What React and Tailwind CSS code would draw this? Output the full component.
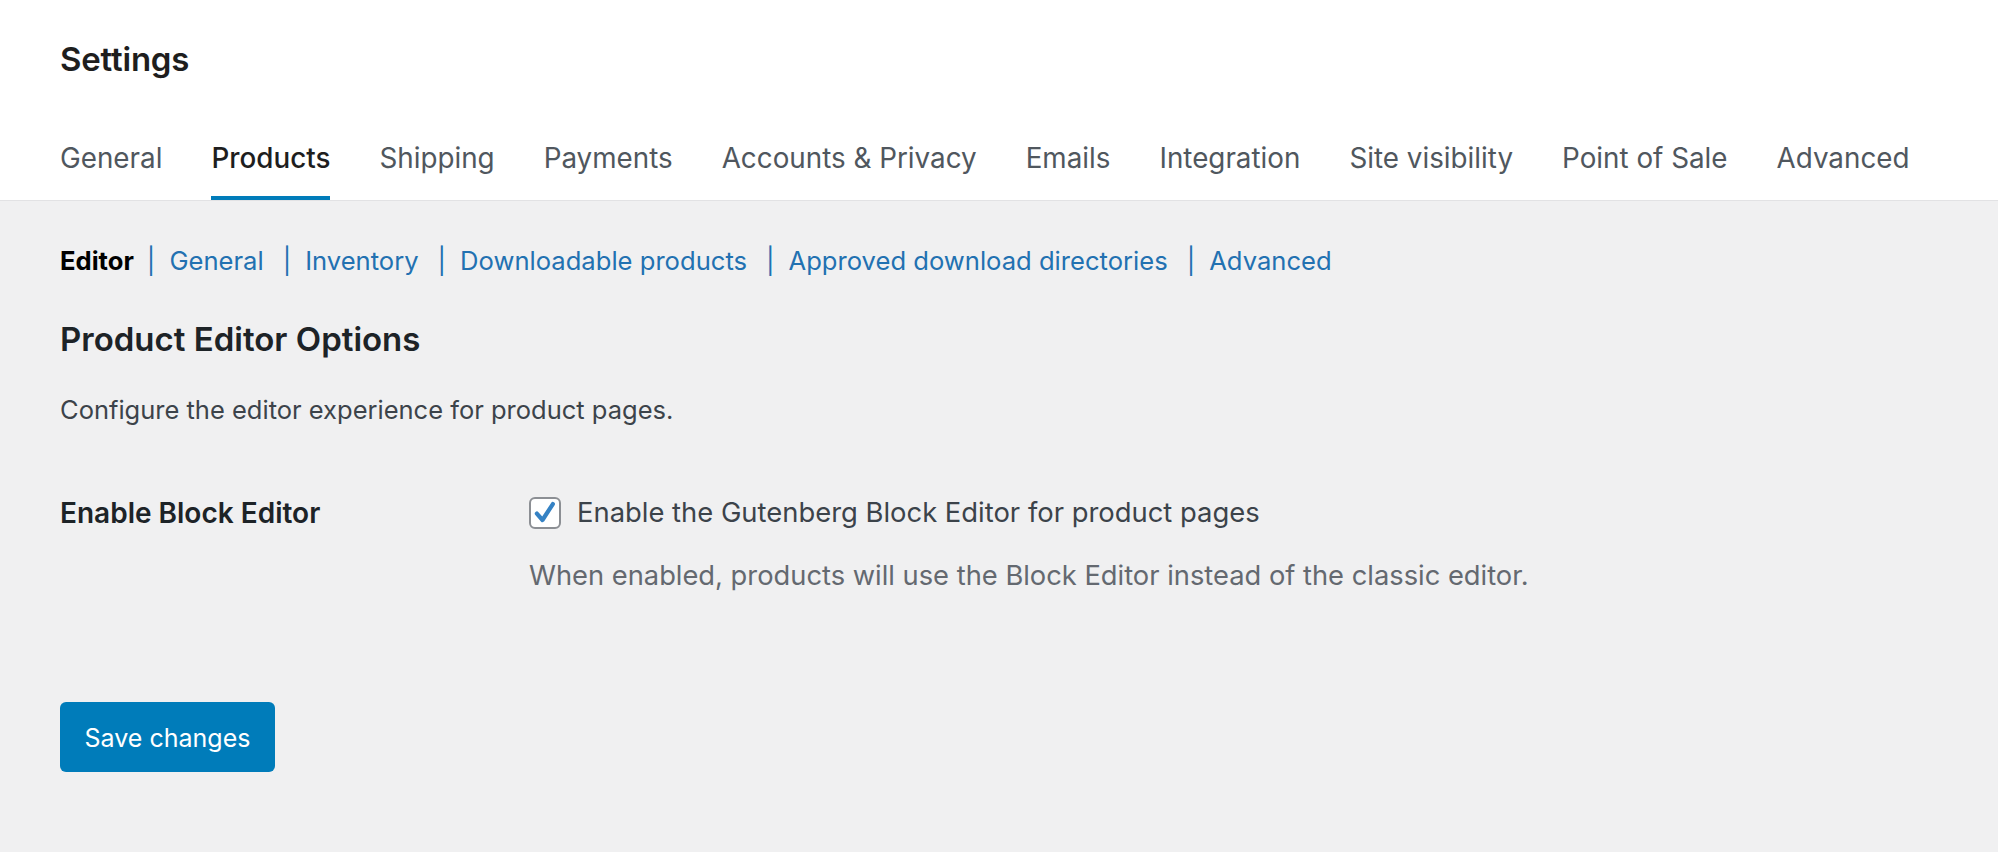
import { useState } from 'react'

const tabs = [
  'General',
  'Products',
  'Shipping',
  'Payments',
  'Accounts & Privacy',
  'Emails',
  'Integration',
  'Site visibility',
  'Point of Sale',
  'Advanced',
]

const sections = ['General', 'Inventory', 'Downloadable products', 'Approved download directories', 'Advanced']

const App = () => {
  const [enabled, setEnabled] = useState(true)

  return (
    <div className="min-h-screen bg-[#f0f0f1] font-['Inter','Noto_Sans',sans-serif]">
      {/* Header */}
      <header className="bg-white border-b border-[#e2e2e4] px-[60px]">
        <div className="h-[120px] flex items-center">
          <h1 className="text-[33px] font-semibold text-[#1e1e1e] tracking-[-0.2px]">Settings</h1>
        </div>
        <nav className="flex gap-[49px]">
          {tabs.map((tab) => (
            <a
              key={tab}
              href="#"
              className={`h-[80px] flex items-center border-b-[4px] text-[27.8px] leading-none ${
                tab === 'Products'
                  ? 'border-[#007cba] text-[#1e1e1e] font-medium'
                  : 'border-transparent text-[#50575e]'
              }`}
            >
              <span className="pt-[1px]">{tab}</span>
            </a>
          ))}
        </nav>
      </header>

      <main className="px-[60px]">
        {/* Section links */}
        <ul className="pt-[42px] flex items-center text-[25.6px] leading-[36px]">
          <li className="font-bold text-[#000]">Editor</li>
          {sections.map((s) => (
            <li key={s} className="flex items-center">
              <span className="text-[#2271b1] pl-[13px] pr-[14px]">|</span>
              <a href="#" className="text-[#2271b1] pr-[6px]">{s}</a>
            </li>
          ))}
        </ul>

        <h2 className="mt-[38px] text-[33px] leading-[44px] font-semibold text-[#1d2327]">Product Editor Options</h2>
        <p className="mt-[29px] text-[25.5px] leading-[40px] text-[#3c434a]">
          Configure the editor experience for product pages.
        </p>

        {/* Form table */}
        <div className="mt-[63px] grid grid-cols-[469px_1fr]">
          <div className="text-[28px] leading-[40px] font-semibold text-[#1d2327]">Enable Block Editor</div>
          <div>
            <label className="flex items-center gap-[16px] h-[40px] cursor-pointer">
              <button
                type="button"
                onClick={() => setEnabled(!enabled)}
                className="w-[32px] h-[32px] rounded-[6px] border-2 border-[#8c8f94] bg-white flex items-center justify-center"
              >
                {enabled && (
                  <svg viewBox="0 0 20 20" className="w-[28px] h-[28px]">
                    <path d="M4.2 10.4 8.2 15 15.6 3.6" fill="none" stroke="#3582c4" strokeWidth="3" strokeLinecap="round" strokeLinejoin="round" />
                  </svg>
                )}
              </button>
              <span className="text-[27.4px] text-[#3c434a]">Enable the Gutenberg Block Editor for product pages</span>
            </label>
            <p className="mt-[23px] text-[27.3px] leading-[40px] text-[#646970]">
              When enabled, products will use the Block Editor instead of the classic editor.
            </p>
          </div>
        </div>

        <button className="mt-[106px] w-[215px] h-[70px] rounded-[6px] bg-[#007cba] text-white text-[25px]">
          <span className="relative top-[2px]">Save changes</span>
        </button>
      </main>
    </div>
  )
}

export default App
